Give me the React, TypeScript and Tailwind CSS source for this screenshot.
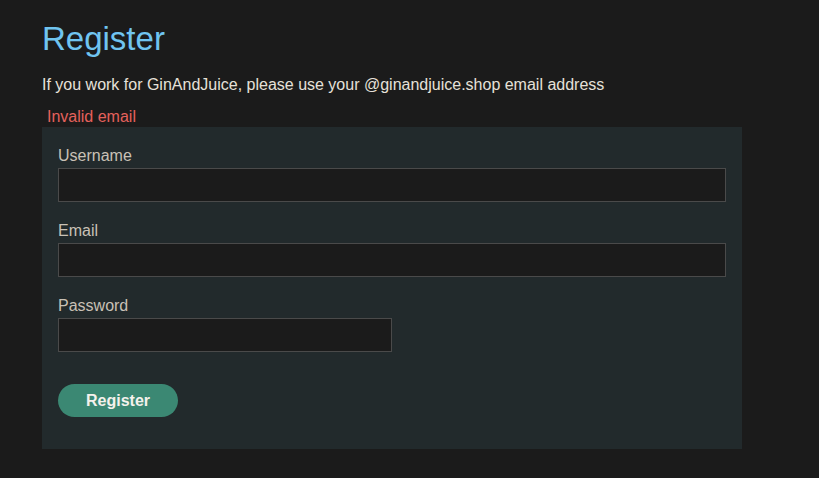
const Field = ({ label, type, narrow }: { label: string; type: string; narrow?: boolean }) => {
  return (
    <div className="flex flex-col">
      <label className="h-5 leading-5 text-[16px] text-[#c9c1b6]">{label}</label>
      <input
        type={type}
        className={`mt-[2px] h-[34px] border border-[#4a4a4a] bg-[#1b1b1b] px-2 text-[#e6e1d9] outline-none ${
          narrow ? "w-[334px]" : "w-full"
        }`}
      />
    </div>
  );
};

const App = () => {
  return (
    <div
      className="min-h-[478px] w-full bg-[#1b1b1b] px-[42px] pt-[19px]"
      style={{ fontFamily: '"Liberation Sans", Arial, sans-serif' }}
    >
      <h1 className="text-[33px] leading-[40px] text-[#70c4f0]">Register</h1>
      <p className="mt-[16px] text-[16px] leading-5 text-[#e6e1d9]">
        If you work for GinAndJuice, please use your @ginandjuice.shop email address
      </p>
      <p className="mt-[12px] pl-[5px] text-[16px] leading-5 text-[#e5615c]">Invalid email</p>

      <form className="w-[700px] bg-[#222a2c] px-4 pt-[19px] pb-[32px]">
        <div className="flex flex-col gap-[19px]">
          <Field label="Username" type="text" />
          <Field label="Email" type="email" />
          <Field label="Password" type="password" narrow />
        </div>
        <button
          type="button"
          className="mt-[32px] h-[33px] w-[120px] rounded-full bg-[#3b8873] text-[16px] font-bold text-[#f4f1ec]"
        >
          Register
        </button>
      </form>
    </div>
  );
};

export default App;
